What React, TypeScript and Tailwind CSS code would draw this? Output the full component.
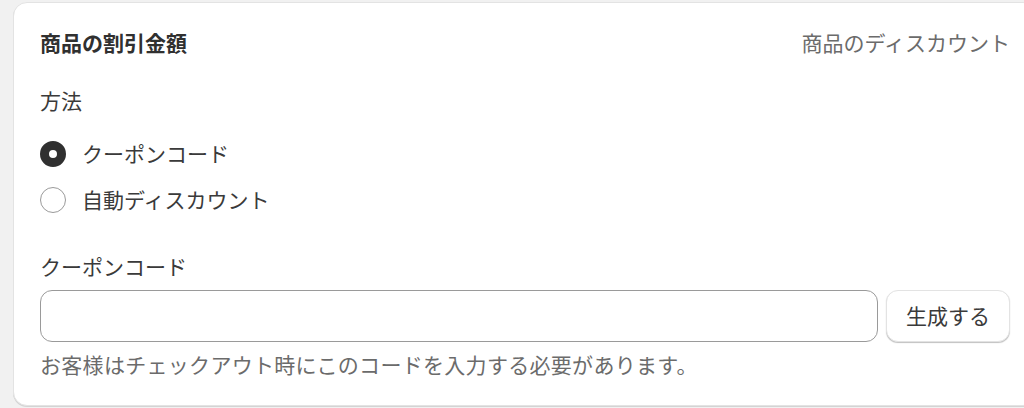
import React, { useState } from 'react';

const font = { fontFamily: '"Noto Sans CJK JP", "Noto Sans", sans-serif' };

function Radio({ checked, label, onClick }: { checked: boolean; label: string; onClick: () => void }) {
  return (
    <button type="button" onClick={onClick} className="flex items-center h-[28px] gap-[16px] text-left">
      {checked ? (
        <span className="w-[26px] h-[26px] rounded-full border-[9px] border-[#303030] bg-white box-border" />
      ) : (
        <span className="w-[26px] h-[26px] rounded-full border border-[#9a9a9a] bg-white box-border" />
      )}
      <span className="text-[21px] text-[#3a3a3a]">{label}</span>
    </button>
  );
}

export default function App() {
  const [method, setMethod] = useState<'code' | 'auto'>('code');
  const [code, setCode] = useState('');

  return (
    <div className="w-[1024px] h-[408px] bg-[#f1f1f1] overflow-hidden pl-[13px] pt-[2px]" style={font}>
      <div className="w-[1024px] bg-white rounded-[14px] border border-[#e3e3e3] shadow-[0_1px_0_0_#d4d4d4] pt-[26px] px-[26px] pb-[26px] flex flex-col">
        {/* Header */}
        <div className="h-[28px] flex items-center justify-between">
          <h2 className="text-[21px] font-bold text-[#303030]">商品の割引金額</h2>
          <span className="text-[21px] text-[#6b6b6b]">商品のディスカウント</span>
        </div>

        {/* Method */}
        <div className="mt-[30px] h-[28px] flex items-center text-[21px] text-[#3a3a3a]">方法</div>
        <div className="mt-[25px] flex flex-col gap-[18px]">
          <Radio checked={method === 'code'} label="クーポンコード" onClick={() => setMethod('code')} />
          <Radio checked={method === 'auto'} label="自動ディスカウント" onClick={() => setMethod('auto')} />
        </div>

        {/* Coupon code */}
        <label className="mt-[39px] h-[28px] flex items-center text-[21px] text-[#3a3a3a]">クーポンコード</label>
        <div className="mt-[9px] flex gap-[8px]">
          <input
            value={code}
            onChange={(e) => setCode(e.target.value)}
            className="flex-1 h-[52px] rounded-[12px] border border-[#9a9a9a] bg-white px-4 text-[21px] outline-none"
          />
          <button
            type="button"
            className="w-[124px] h-[52px] rounded-[12px] border border-[#e3e3e3] bg-white shadow-[0_1px_1px_0_rgba(0,0,0,0.25)] text-[21px] text-[#3a3a3a]"
          >
            生成する
          </button>
        </div>
        <p className="mt-[9px] h-[28px] flex items-center text-[21px] tracking-[0.3px] text-[#6b6b6b]">
          お客様はチェックアウト時にこのコードを入力する必要があります。
        </p>
      </div>
    </div>
  );
}
